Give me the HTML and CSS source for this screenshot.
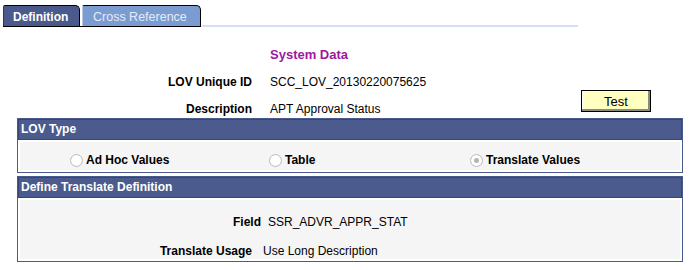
FILE: index.html
```html
<!DOCTYPE html>
<html>
<head>
<meta charset="utf-8">
<link rel="stylesheet" href="styles.css">
</head>
<body>
<div class="tabs">
  <div class="tabset">
    <div class="tab tab-active">Definition</div>
    <div class="tab tab-other">Cross Reference</div>
  </div>
  <div class="tab-fill"></div>
</div>

<div class="top">
  <div class="lbl"></div>
  <div class="sysdata">System Data</div>
  <div class="lbl">LOV Unique ID</div>
  <div class="val">SCC_LOV_20130220075625</div>
  <button class="btn">Test</button>
  <div class="lbl">Description</div>
  <div class="val">APT Approval Status</div>
</div>

<div class="box box1">
  <div class="box-head">LOV Type</div>
  <div class="box-body">
    <div class="radios">
      <div class="ritem"><span class="radio"></span><span class="rlbl">Ad Hoc Values</span></div>
      <div class="ritem"><span class="radio"></span><span class="rlbl">Table</span></div>
      <div class="ritem"><span class="radio radio-on"></span><span class="rlbl">Translate Values</span></div>
    </div>
  </div>
</div>

<div class="box box2">
  <div class="box-head">Define Translate Definition</div>
  <div class="box-body">
    <div class="drows">
      <div class="drow drow-field"><span class="lbl">Field</span><span class="val">SSR_ADVR_APPR_STAT</span></div>
      <div class="drow drow-usage"><span class="lbl">Translate Usage</span><span class="val">Use Long Description</span></div>
    </div>
  </div>
</div>
</body>
</html>
```

FILE: styles.css
```css
* { box-sizing: border-box; }
body {
  margin: 0;
  background: #fff;
  font-family: "Liberation Sans", Arial, sans-serif;
  font-size: 12px;
  color: #000;
  width: 689px;
  height: 270px;
  overflow: hidden;
}

/* tabs */
.tabs {
  display: flex;
  align-items: flex-end;
  height: 27px;
  padding-left: 3px;
}
.tabset {
  display: flex;
  gap: 2px;
  border-bottom: 1px solid #000;
}
.tab {
  height: 21px;
  line-height: 22px;
  border-top: 1px solid #000;
  border-right: 1px solid #000;
  border-top-right-radius: 5px;
  border-top-left-radius: 2px;
}
.tab-active {
  width: 77px;
  background: #4a5a8c;
  border-left: 1px solid #2c3660;
  color: #fff;
  font-weight: bold;
  padding-left: 9px;
}
.tab-other {
  width: 119px;
  background: #7b9cd0;
  border-left: 1px solid #b8c8e6;
  color: #e4ebf7;
  padding-left: 10px;
  font-size: 12.5px;
}
.tab-fill {
  width: 376px;
  height: 2px;
  margin-left: 1px;
  background: #d3e0f4;
}

/* top section */
.top {
  display: grid;
  grid-template-columns: 252px 1fr 70px;
  column-gap: 18px;
  row-gap: 13px;
  grid-auto-rows: 14px;
  padding: 21px 38px 2px 0;
  line-height: 14px;
}
.lbl {
  font-weight: bold;
  text-align: right;
  white-space: nowrap;
}
.val { white-space: nowrap; }
.sysdata {
  grid-column: 2 / 4;
  color: #9e189d;
  font-weight: bold;
  font-size: 13px;
}
.btn {
  grid-column: 3;
  grid-row: 2 / 4;
  align-self: end;
  margin: 0 0 4px 0;
  height: 22px;
  width: 70px;
  padding: 0;
  font-family: "Liberation Sans", Arial, sans-serif;
  font-size: 13px;
  color: #000;
  background: #ffffc0;
  border: 1px solid #000;
  box-shadow: inset -2px -2px 0 #8a8a80, inset 1px 1px 0 #fff;
  border-radius: 0;
}

/* group boxes */
.box {
  margin-left: 17px;
  width: 666px;
  border: 1px solid #4a5a8c;
  background: #fff;
}
.box2 { margin-top: 3px; }
.box-head {
  height: 21px;
  line-height: 21px;
  background: #4b5b8d;
  box-shadow: inset 0 0 0 1px #36447a;
  color: #fff;
  font-weight: bold;
  padding-left: 3px;
}
.box-body {
  padding: 2px;
}
.radios {
  background: #f5f5f5;
  height: 28px;
  padding: 11px 0 0 50px;
  display: grid;
  grid-template-columns: 199px 201px auto;
}
.ritem {
  display: flex;
  align-items: center;
  height: 14px;
  font-weight: bold;
}
.radio {
  display: inline-block;
  width: 13px;
  height: 13px;
  border-radius: 50%;
  border: 1px solid #bdbdbd;
  background: radial-gradient(circle at 50% 50%, #fff 55%, #ececec 100%);
  margin-right: 3px;
  position: relative;
  flex: none;
}
.radio-on::after {
  content: "";
  position: absolute;
  left: 3px;
  top: 3px;
  width: 5px;
  height: 5px;
  border-radius: 50%;
  background: #b4b4b4;
}
.rlbl { line-height: 14px; }

.drows {
  background: #f5f5f5;
  height: 59px;
  padding-top: 15px;
  display: flex;
  flex-direction: column;
  gap: 15px;
}
.drow {
  display: flex;
  line-height: 14px;
  height: 14px;
}
.drow-field .lbl { width: 241px; margin-right: 7px; }
.drow-usage .lbl { width: 232px; margin-right: 11px; }
```
